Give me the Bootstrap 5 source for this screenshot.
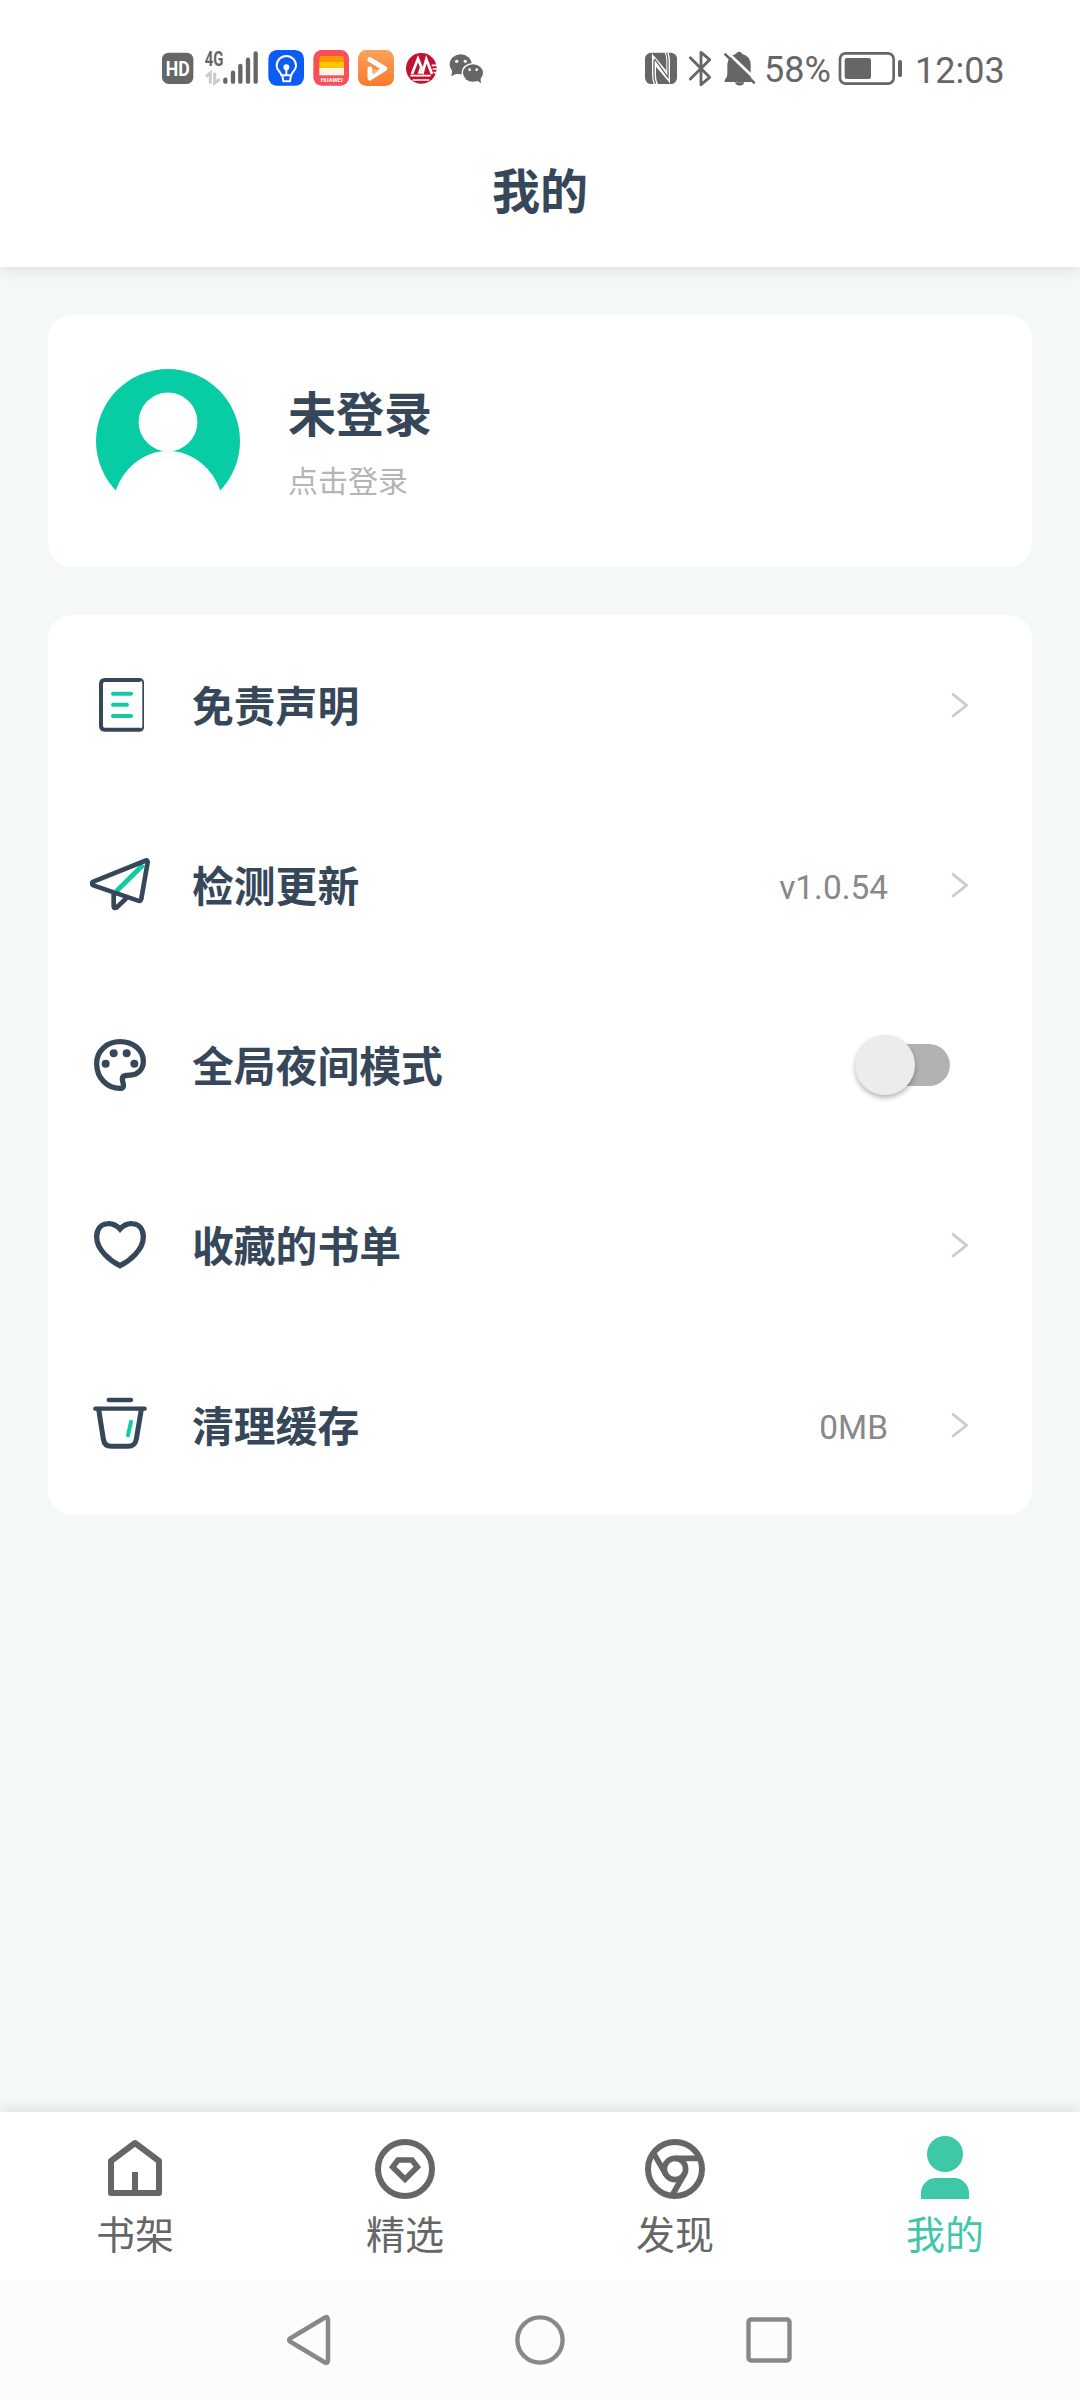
<!DOCTYPE html>
<html lang="zh-CN">
<head>
<meta charset="utf-8">
<meta name="viewport" content="width=device-width, initial-scale=1">
<title>我的</title>
<link rel="stylesheet" href="https://cdn.jsdelivr.net/npm/bootstrap@5.3.0/dist/css/bootstrap.min.css">
<style>
:root{--ink:#37475a;--mint:#12cba5;--page:#f4f8f9;--gray:#666}
body{font-family:Roboto,"Noto Sans CJK SC",sans-serif;background:var(--page);color:var(--ink);line-height:1.2}
svg{display:block;flex:none}
.screen{width:1080px;height:2400px;overflow:hidden}
.topbar{height:267px;box-shadow:0 2px 14px rgba(0,0,0,.11);z-index:1}
.statusbar{height:100px;padding:40px 76px 0 160px;color:var(--gray)}
.stat-text{font-size:36px;line-height:60px;height:60px}
.charge{width:74px}
.clock{width:89px;margin-left:11px;padding-top:1px}
.page-title{font-size:48px;line-height:60px;margin-top:63px}
.main-area{padding:48px 48px 0;gap:48px}
.panel{border:0;border-radius:24px}
.profile{height:252px;padding:54px 48px;gap:48px}
.nick{font-size:48px;line-height:58px;margin-top:18px}
.hint{font-size:30px;line-height:40px;color:#b5b5b5;margin-top:17px}
.menu-row{height:180px;padding:0 62px 0 42px;border:0;background:transparent}
.menu-label{font-size:41.8px;margin-left:42px;line-height:60px;padding-top:6px;color:var(--ink)}
.menu-value{font-size:33.4px;color:#888;margin-right:62px;line-height:60px;padding-top:5px}
.toggle{width:96px;height:42px;padding-left:6px;margin-right:20px}
.toggle-track{width:90px;height:42px;border-radius:21px;background:#b2b2b2}
.toggle-thumb{width:60px;height:60px;left:1px;top:-9px;background:#ececec;box-shadow:0 3px 5px rgba(0,0,0,.28)}
.tabs{height:168px;padding-top:21px;box-shadow:0 -2px 14px rgba(0,0,0,.11);color:var(--gray)}
.tab-item{width:270px;font-size:39px;line-height:50px}
.tab-item span{margin-top:6px}
.tab-item.current{color:#3fc8a7}
.sysnav{height:120px;background:#fcfcfc}
</style>
<script src="https://cdn.jsdelivr.net/npm/bootstrap@5.3.0/dist/js/bootstrap.bundle.min.js"></script>
</head>
<body>
<div class="screen d-flex flex-column">
  <header class="topbar bg-white position-relative flex-shrink-0">
    <div class="statusbar d-flex">
      <!-- HD -->
      <svg width="40" height="60" viewBox="30 0 120 180"><rect x="36" y="38" width="94" height="94" rx="20" fill="#666"/><text x="83" y="108" text-anchor="middle" textLength="72" lengthAdjust="spacingAndGlyphs" font-family="Roboto" font-weight="700" font-size="58" fill="#fff">HD</text></svg>
      <!-- mobile signal -->
      <svg width="62" height="60" viewBox="150 0 186 180" fill="#666"><text x="164" y="77" textLength="56" lengthAdjust="spacingAndGlyphs" font-family="Roboto" font-weight="700" font-size="58">4G</text>
        <g fill="none" stroke="#ccc" stroke-width="9"><path d="M168 110l13-11v32M194 98v31l15-11"/></g>
        <g stroke="#666" stroke-width="13" stroke-linecap="round"><path d="M226 119v6M249 98v27M271 78v47M294 59v66M317 40v85"/></g></svg>
      <!-- bulb app -->
      <svg width="48" height="60" viewBox="336 0 144 180"><rect x="355" y="30" width="107" height="107" rx="26" fill="#0a5cf5"/><g fill="none" stroke="#fff" stroke-width="6" stroke-linecap="round" stroke-linejoin="round"><path d="M394 106C392 93 380 92 380 77a29 29 0 0 1 58 0c0 15-12 16-14 29zM397 106l3 18h20l3-18M409 88v17"/><circle cx="409" cy="82" r="6" fill="#fff"/></g></svg>
      <!-- wallet app -->
      <svg width="44" height="60" viewBox="480 0 132 180"><rect x="490" y="30" width="107" height="107" rx="25" fill="#f94e5a"/><path d="M508 54q0-6 6-6h62q6 0 6 6v20h-74z" fill="#ff9800"/><path d="M508 66h74v24h-74z" fill="#ffc400"/><path d="M508 84h74v22h-74z" fill="#fff5e4"/><text x="512" y="126" textLength="66" lengthAdjust="spacingAndGlyphs" font-family="Roboto" font-weight="700" font-size="18" fill="#fff">HUAWEI</text></svg>
      <!-- video app -->
      <svg width="46" height="60" viewBox="612 0 138 180"><defs><linearGradient id="vid" x2="0" y2="1"><stop stop-color="#f9a35a"/><stop offset="1" stop-color="#f97a2e"/></linearGradient></defs><rect x="624" y="30" width="108" height="108" rx="25" fill="url(#vid)"/><path d="M660 59L704 86L660 114V87" fill="none" stroke="#fff" stroke-width="15" stroke-linecap="round" stroke-linejoin="round"/><path d="M672 86l13 7-16 12z" fill="#fcb88a"/></svg>
      <!-- bank app -->
      <svg width="44" height="60" viewBox="750 0 132 180"><circle cx="814" cy="85" r="46" fill="#c31230"/><path d="M786 102L804 56L819 94L829 58L846 102" fill="none" stroke="#fff" stroke-width="8"/><path d="M803 101l7-20 8 20z" fill="#fff"/><path d="M781 107h61M788 120h50M845 76h17M848 87h15M851 98h10" stroke="#fff" stroke-width="5"/></svg>
      <!-- chat app -->
      <svg width="46" height="60" viewBox="882 0 138 180"><path d="M907 91l-3 18 18-9z" fill="#666"/><ellipse cx="932" cy="73" rx="33" ry="30" fill="#666"/><ellipse cx="968" cy="98" rx="33" ry="29" fill="#fff"/><ellipse cx="969" cy="99" rx="30" ry="26" fill="#666"/><path d="M980 121l13 9-2-19z" fill="#666"/><g fill="#fff"><circle cx="920" cy="64" r="5"/><circle cx="946" cy="64" r="5"/><circle cx="959" cy="89" r="4"/><circle cx="980" cy="89" r="4"/></g></svg>
      <div class="d-flex ms-auto">
        <!-- NFC -->
        <svg width="44" height="60" viewBox="30 0 132 180"><rect x="45" y="38" width="96" height="94" rx="19" fill="#666"/><path d="M66 38Q71 50 76 52L109 92V62Q109 46 104 38H116Q120 50 120 64V131Q114 120 109 117L78 80V106Q78 122 84 132H71Q66 120 66 106z" fill="#fff"/><path d="M72 60V108Q72 122 77 131M73 56L114 112V62Q114 48 110 39" fill="none" stroke="#666" stroke-width="4"/></svg>
        <!-- bluetooth -->
        <svg width="34" height="60" viewBox="162 0 102 180"><path d="M181 53L239 112L213 134V37L239 59L181 117" fill="none" stroke="#666" stroke-width="8.500" stroke-linejoin="round" stroke-linecap="round"/></svg>
        <!-- muted bell -->
        <svg width="46" height="60" viewBox="264 0 138 180"><path d="M318 41q4-7 10-6 6 0 9 7 24 7 25 31v35q0 9 8 18h-86v-6q8-7 8-19V75q1-20 16-29z" fill="#666"/><path d="M315 127h28q-3 10-14 10t-14-10z" fill="#666"/><path d="M292 37l87 83" stroke="#fff" stroke-width="8"/><path d="M286 43l86 85" stroke="#666" stroke-width="8" stroke-linecap="round"/></svg>
        <span class="stat-text charge">58%</span>
        <!-- battery -->
        <svg width="66" height="60" viewBox="624 0 198 180"><rect x="630" y="40" width="161" height="91" rx="17" fill="none" stroke="#666" stroke-width="8"/><rect x="644" y="54" width="79" height="63" rx="7" fill="#666"/><rect x="804" y="60" width="12" height="51" rx="5" fill="#666"/></svg>
        <span class="stat-text clock">12:03</span>
      </div>
    </div>
    <h1 class="page-title fw-bold text-center mb-0">我的</h1>
  </header>

  <main class="main-area d-flex flex-column flex-grow-1">
    <section class="card panel profile flex-row">
      <svg width="144" height="144" viewBox="0 0 144 144"><defs><clipPath id="cut"><path d="M0 0h144v123H0z"/></clipPath></defs><g clip-path="url(#cut)"><circle cx="72" cy="72" r="72" fill="#08cda4"/><circle cx="72" cy="53" r="29.400" fill="#fff"/><path d="M19 124C26 101 46 82 72 82s46 19 53 42z" fill="#fff"/></g></svg>
      <div>
        <div class="nick fw-bold">未登录</div>
        <div class="hint">点击登录</div>
      </div>
    </section>

    <ul class="card panel list-group list-group-flush">
      <li class="list-group-item menu-row d-flex align-items-center">
        <svg width="60" height="60" viewBox="30 75 180 180"><path d="M182 90H75q-12 0-12 12v126q0 11 12 11h107" fill="none" stroke="#37475a" stroke-width="12"/><path d="M180 84q12 2 12 14v134q0 10-10 13l-4-8q9-2 9-8V101q0-9-9-11z" fill="#37475a"/><path d="M99 131h54M99 164h42M99 198h54" stroke="#12cba5" stroke-width="12" stroke-linecap="round"/></svg>
        <span class="menu-label fw-bold">免责声明</span>
        <svg class="ms-auto" width="20" height="30" viewBox="630 90 60 90"><path d="M639 103l41 33-41 32" fill="none" stroke="#ccc" stroke-width="8.500" stroke-linecap="round" stroke-linejoin="round"/></svg>
      </li>
      <li class="list-group-item menu-row d-flex align-items-center">
        <svg width="60" height="60" viewBox="30 615 180 180"><path d="M190 644L109 724" stroke="#12cba5" stroke-width="15"/><g fill="none" stroke="#37475a" stroke-width="14" stroke-linejoin="round" stroke-linecap="round"><path d="M37 700Q35 697 40 695L194 633Q203 628 203 637L184 746Q182 755 174 752L40 706Q36 704 37 700zM101 732v37q1 7 8 4l27-25" /></g></svg>
        <span class="menu-label fw-bold">检测更新</span>
        <span class="menu-value ms-auto">v1.0.54</span>
        <svg width="20" height="30" viewBox="630 90 60 90"><path d="M639 103l41 33-41 32" fill="none" stroke="#ccc" stroke-width="8.500" stroke-linecap="round" stroke-linejoin="round"/></svg>
      </li>
      <li class="list-group-item menu-row d-flex align-items-center">
        <svg width="60" height="60" viewBox="30 75 180 180"><path d="M124 235C82 237 50 204 50 161C50 121 82 95 120 95C159 95 190 119 190 154C190 180 171 194 153 195C136 196 128 196 127 205C126 215 137 232 124 235z" fill="none" stroke="#37475a" stroke-width="16" stroke-linejoin="round"/><g fill="#37475a"><circle cx="77" cy="161" r="12"/><circle cx="101" cy="130" r="12"/><circle cx="140" cy="130" r="12"/><circle cx="163" cy="161" r="12"/></g></svg>
        <span class="menu-label fw-bold">全局夜间模式</span>
        <div class="toggle ms-auto position-relative" role="switch" aria-checked="false"><div class="toggle-track"></div><div class="toggle-thumb position-absolute rounded-circle"></div></div>
      </li>
      <li class="list-group-item menu-row d-flex align-items-center">
        <svg width="60" height="60" viewBox="30 615 180 180"><path d="M120 657C106 642 94 640 83 641C62 642 50 659 50 681C50 719 90 752 120 767C150 752 190 719 190 681C190 659 178 642 157 641C146 640 134 642 120 657z" fill="none" stroke="#37475a" stroke-width="16"/></svg>
        <span class="menu-label fw-bold">收藏的书单</span>
        <svg class="ms-auto" width="20" height="30" viewBox="630 90 60 90"><path d="M639 103l41 33-41 32" fill="none" stroke="#ccc" stroke-width="8.500" stroke-linecap="round" stroke-linejoin="round"/></svg>
      </li>
      <li class="list-group-item menu-row d-flex align-items-center">
        <svg width="60" height="60" viewBox="30 75 180 180"><g fill="none" stroke="#37475a" stroke-linecap="round"><path d="M86 90h67M46 116h148" stroke-width="13"/><path d="M56 118L70 207Q73 229 94 229H144Q166 229 169 207L184 118" stroke-width="15"/></g><path d="M153 155l-9 41" stroke="#12cba5" stroke-width="12" stroke-linecap="round"/></svg>
        <span class="menu-label fw-bold">清理缓存</span>
        <span class="menu-value ms-auto">0MB</span>
        <svg width="20" height="30" viewBox="630 90 60 90"><path d="M639 103l41 33-41 32" fill="none" stroke="#ccc" stroke-width="8.500" stroke-linecap="round" stroke-linejoin="round"/></svg>
      </li>
    </ul>
  </main>

  <nav class="tabs d-flex bg-white flex-shrink-0">
    <div class="tab-item d-flex flex-column align-items-center">
      <svg width="72" height="72" viewBox="117 129 216 216"><g fill="none" stroke="#666" stroke-width="18" stroke-linejoin="round"><path d="M153 309V213L225 159L297 213V309z"/><path d="M225 246v60"/></g></svg>
      <span>书架</span>
    </div>
    <div class="tab-item d-flex flex-column align-items-center">
      <svg width="72" height="72" viewBox="927 129 216 216"><g fill="none" stroke="#666" stroke-width="18"><circle cx="1035" cy="237" r="81"/><path d="M1014 210H1056L1072 231L1035 268L998 231z" stroke-width="17"/></g></svg>
      <span>精选</span>
    </div>
    <div class="tab-item d-flex flex-column align-items-center">
      <svg width="72" height="72" viewBox="177 129 216 216"><g fill="none" stroke="#666"><circle cx="285" cy="237" r="81" stroke-width="18"/><circle cx="285" cy="237" r="32" stroke-width="17"/><path d="M285 205H359M258 254L221 190M313 252L277 315" stroke-width="17"/></g></svg>
      <span>发现</span>
    </div>
    <div class="tab-item current d-flex flex-column align-items-center">
      <svg width="72" height="72" viewBox="987 129 216 216" fill="#3fc8a7"><circle cx="1095" cy="192" r="54"/><path d="M1023 327V309a45 45 0 0 1 45-45h54a45 45 0 0 1 45 45v18z"/></svg>
      <span>我的</span>
    </div>
  </nav>

  <div class="sysnav d-flex justify-content-center align-items-center flex-shrink-0">
    <svg width="516" height="60" viewBox="282 2310 516 60" fill="none" stroke="#888" stroke-width="4.400" stroke-linejoin="round"><path d="M290 2338.500L325 2317.500Q328 2316 328 2320V2360Q328 2364 325 2362.500L290 2341.500Q288 2340 290 2338.500z"/><circle cx="540" cy="2340" r="22.600"/><rect x="748.500" y="2319.500" width="41" height="41" rx="2.500"/></svg>
  </div>
</div>
</body>
</html>
